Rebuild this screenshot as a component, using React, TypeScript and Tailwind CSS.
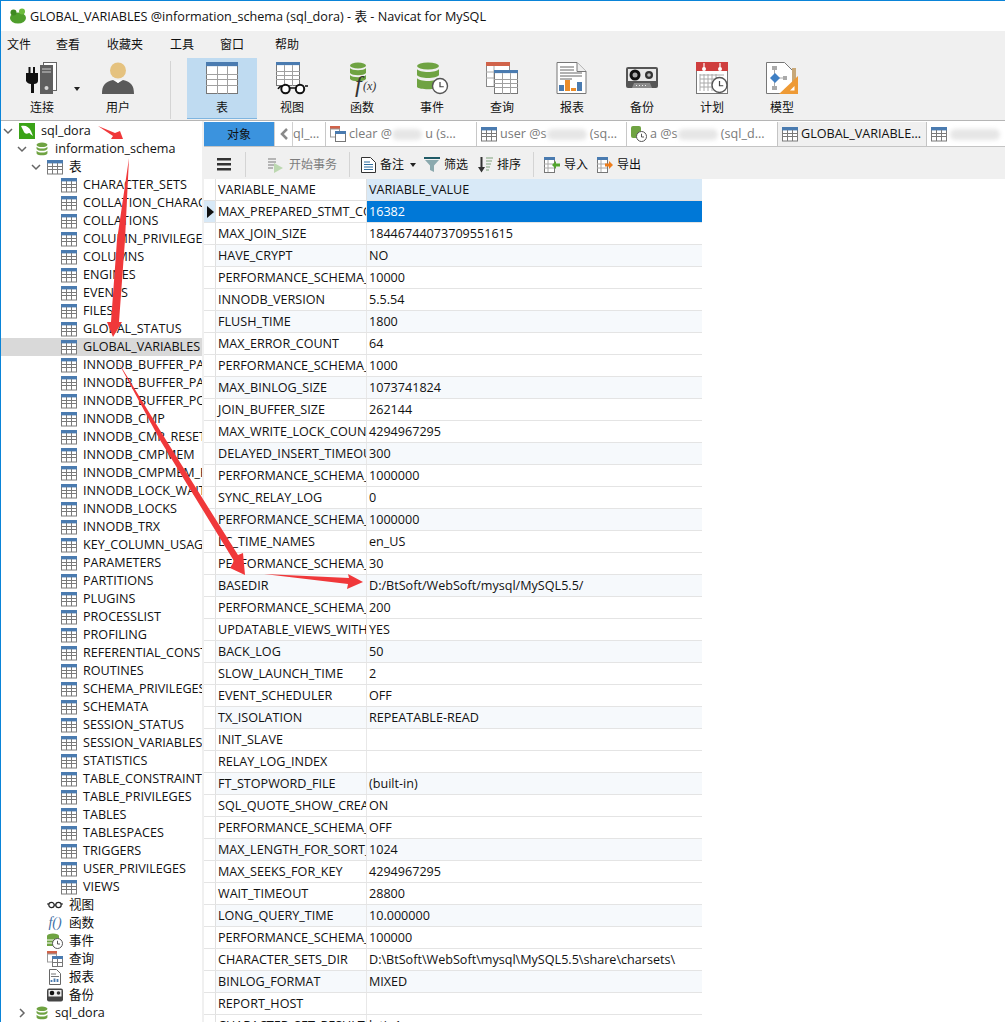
import React from "react";

const FONT = { fontFamily: '"Open Sans","Noto Sans","Noto Sans CJK SC",sans-serif' };

function TableIcon({ size = 16, head = "#4a7bb0", line = "#7a7a7a" }: { size?: number; head?: string; line?: string }) {
  return (
    <svg width={size} height={size} viewBox="0 0 16 16" className="shrink-0">
      <rect x="0.5" y="1.5" width="15" height="13.5" fill="#fff" stroke={line} />
      <rect x="0" y="1" width="16" height="3.4" fill={head} />
      <path d="M0.5 7.5H15.5M0.5 10.5H15.5M5.5 4V15M10.5 4V15" stroke={line} strokeWidth="1" fill="none" />
    </svg>
  );
}

function BigTable({ x = 0, y = 0, w = 32, h = 32, head = "#4a7bb0" }: { x?: number; y?: number; w?: number; h?: number; head?: string }) {
  const c = [1, 2].map((i) => Math.round(x + (w * i) / 3) + 0.5);
  const r = [0.36, 0.54, 0.72].map((f) => Math.round(y + h * f) + 0.5);
  return (
    <g>
      <rect x={x + 0.5} y={y + 0.5} width={w - 1} height={h - 1} fill="#fff" stroke="#777" />
      <rect x={x} y={y} width={w} height={h * 0.13} fill={head} />
      {r.map((f) => (
        <path key={f} d={`M${x} ${f}H${x + w}`} stroke="#a0a0a0" />
      ))}
      {c.map((v) => (
        <path key={v} d={`M${v} ${y + h * 0.13}V${y + h}`} stroke="#a0a0a0" />
      ))}
    </g>
  );
}

function DbStack({ size = 16, color = "#6fa342" }: { size?: number; color?: string }) {
  return (
    <svg width={size} height={size} viewBox="0 0 16 16" className="shrink-0">
      <ellipse cx="8" cy="3.2" rx="6.2" ry="2.6" fill={color} />
      <path d="M1.8 5.4c1 1.6 3.6 2 6.2 2s5.2-.4 6.2-2v2.7c-1 1.6-3.6 2-6.2 2s-5.2-.4-6.2-2z" fill={color} />
      <path d="M1.8 10c1 1.6 3.6 2 6.2 2s5.2-.4 6.2-2v3c-1 1.6-3.6 2.2-6.2 2.2S2.8 14.6 1.8 13z" fill={color} />
    </svg>
  );
}

function Clock({ cx, cy, r }: { cx: number; cy: number; r: number }) {
  return (
    <g>
      <circle cx={cx} cy={cy} r={r} fill="#fff" stroke="#555" strokeWidth={r > 6 ? 1.4 : 1} />
      <path d={`M${cx} ${cy - r * 0.55}V${cy + r * 0.1}H${cx + r * 0.5}`} fill="none" stroke="#444" strokeWidth={r > 6 ? 1.2 : 0.9} />
    </g>
  );
}

const S32 = ({ children }: { children: React.ReactNode }) => (
  <svg width="32" height="32" viewBox="0 0 32 32" className="overflow-visible">
    {children}
  </svg>
);

const BigIcons: Record<string, React.ReactNode> = {
  conn: (
    <svg width="34" height="32" viewBox="0 0 34 32">
      <rect x="18.5" y="0.5" width="13" height="28" fill="#fff" stroke="#666" />
      <rect x="15" y="3" width="13" height="29" fill="#5f5f5f" />
      <path d="M17 7h9M17 10h9" stroke="#cfcfcf" />
      <circle cx="21.5" cy="26" r="2" fill="#d8d8d8" />
      <path d="M1 11h2.5V5h2v6h2.5V5h2v6H13v8c0 2-2 3-4 3v9H6v-9c-2 0-4-1-5-3z" fill="#111" />
    </svg>
  ),
  user: (
    <S32>
      <circle cx="16" cy="8.5" r="8" fill="#e5c27f" />
      <path d="M0 32c0-9 3-12 11-14l5 3 5-3c8 2 11 5 11 14z" fill="#5a5a5a" />
      <path d="M12.5 18l3.5 3 3.5-3" fill="#fff" />
    </S32>
  ),
  table: (
    <S32>
      <BigTable />
    </S32>
  ),
  view: (
    <S32>
      <BigTable x={0} y={0} w={24} h={24} />
      <path d="M2 27c1-2 3-3 5-3M32 24c-1 0-2 0-3 0" stroke="#111" strokeWidth="1.5" fill="none" />
      <circle cx="9.5" cy="27" r="4.2" fill="#fff" stroke="#111" strokeWidth="2" />
      <circle cx="24" cy="27" r="4.2" fill="#fff" stroke="#111" strokeWidth="2" />
      <path d="M13.5 26h6.5" stroke="#111" strokeWidth="1.5" />
    </S32>
  ),
  func: (
    <S32>
      <ellipse cx="12" cy="3.5" rx="8" ry="3" fill="#6fa342" />
      <path d="M4 6c2 3 14 3 16 0v5c-2 3-14 3-16 0z" fill="#6fa342" />
      <path d="M4 13c2 3 14 3 16 0v4c-2 3-14 3-16 0z" fill="#6fa342" />
      <text x="9" y="30" fontFamily="Liberation Serif" fontStyle="italic" fontSize="24" fill="#333">f</text>
      <text x="17" y="28" fontFamily="Liberation Serif" fontStyle="italic" fontSize="12" fill="#333">(x)</text>
    </S32>
  ),
  event: (
    <S32>
      <ellipse cx="12" cy="4" rx="11" ry="3.5" fill="#6fa342" />
      <path d="M1 7c2 4 20 4 22 0v6c-2 4-20 4-22 0z" fill="#6fa342" />
      <path d="M1 16c2 4 20 4 22 0v9c-2 3-20 3-22 0z" fill="#6fa342" />
      <Clock cx={24} cy={24} r={7.5} />
    </S32>
  ),
  query: (
    <S32>
      <rect x="0.5" y="0.5" width="23" height="24" fill="#fff" stroke="#888" />
      <rect x="0" y="0" width="24" height="4" fill="#d0634a" />
      <path d="M0 10h8M0 16h8M8 4v20" stroke="#aaa" />
      <BigTable x={8} y={8} w={24} h={24} />
    </S32>
  ),
  report: (
    <S32>
      <path d="M1 .5h20l9 9v22H1z" fill="#fff" stroke="#777" />
      <path d="M21 .5v9h9" fill="#eee" stroke="#777" />
      <path d="M4 5h14M4 8h14M4 11h22M4 14h22M4 17h12" stroke="#666" />
      <rect x="3" y="23" width="5" height="6" fill="#4a7bb0" />
      <rect x="9" y="18" width="5" height="11" fill="#ea8c2a" />
      <rect x="15" y="26" width="5" height="3" fill="#ea8c2a" />
      <rect x="21" y="20" width="5" height="9" fill="#4a7bb0" />
    </S32>
  ),
  backup: (
    <S32>
      <rect x="0" y="5" width="32" height="21" rx="2" fill="#555" />
      <rect x="2" y="7" width="28" height="12" fill="#e8e8e8" />
      <circle cx="9" cy="13" r="5.5" fill="#111" />
      <circle cx="9" cy="13" r="2.5" fill="#aaa" />
      <circle cx="23" cy="13" r="4" fill="#333" />
      <circle cx="23" cy="13" r="1.8" fill="#bbb" />
      <path d="M6 26l2-5h16l2 5z" fill="#8a8a8a" />
      <path d="M10 23.5h12" stroke="#eee" strokeDasharray="1 2" />
    </S32>
  ),
  plan: (
    <S32>
      <rect x="0.5" y="0.5" width="31" height="31" fill="#fff" stroke="#777" />
      <rect x="0" y="0" width="32" height="9" fill="#cf3e3e" />
      <circle cx="8" cy="7" r="2" fill="#fff" />
      <circle cx="24" cy="7" r="2" fill="#fff" />
      <path d="M8 1v5M24 1v5" stroke="#fff" strokeWidth="1.2" />
      <path d="M4 13h24M4 17h24M4 21h24M4 25h24M8 12v17M12 12v17M16 12v17M20 12v17M4 12v17" stroke="#aaa" />
      <Clock cx={23.5} cy={23} r={7.5} />
    </S32>
  ),
  model: (
    <S32>
      <path d="M.5.5h18l8 8v23H.5z" fill="#fff" stroke="#777" />
      <path d="M6 4h5v4H6zM17 14h4v4h-4zM6 24h5v4H6z" fill="#aaa" />
      <path d="M8.5 8v16M12 16h5" stroke="#aaa" />
      <path d="M9 11l5 5-5 5-5-5z" fill="#3f7fc4" />
      <rect x="26" y="6" width="4" height="16" fill="#c8a878" />
      <path d="M32 14v18H13z" fill="#ee9a35" />
      <path d="M28.5 24v4.5H24z" fill="#fff" />
    </S32>
  ),
};

const tools: [string, string][] = [
  ["conn", "连接"],
  ["user", "用户"],
  ["table", "表"],
  ["view", "视图"],
  ["func", "函数"],
  ["event", "事件"],
  ["query", "查询"],
  ["report", "报表"],
  ["backup", "备份"],
  ["plan", "计划"],
  ["model", "模型"],
];

const tables = [
  "CHARACTER_SETS","COLLATION_CHARACTER_SET_APPLICABILITY","COLLATIONS","COLUMN_PRIVILEGES","COLUMNS","ENGINES","EVENTS","FILES","GLOBAL_STATUS","GLOBAL_VARIABLES","INNODB_BUFFER_PAGE","INNODB_BUFFER_PAGE_LRU","INNODB_BUFFER_POOL_STATS","INNODB_CMP","INNODB_CMP_RESET","INNODB_CMPMEM","INNODB_CMPMEM_RESET","INNODB_LOCK_WAITS","INNODB_LOCKS","INNODB_TRX","KEY_COLUMN_USAGE","PARAMETERS","PARTITIONS","PLUGINS","PROCESSLIST","PROFILING","REFERENTIAL_CONSTRAINTS","ROUTINES","SCHEMA_PRIVILEGES","SCHEMATA","SESSION_STATUS","SESSION_VARIABLES","STATISTICS","TABLE_CONSTRAINTS","TABLE_PRIVILEGES","TABLES","TABLESPACES","TRIGGERS","USER_PRIVILEGES","VIEWS",
];

const P = "PERFORMANCE_SCHEMA_MAX_INSTANCES";
const rows: [string, string][] = [
  ["MAX_PREPARED_STMT_COUNT","16382"],["MAX_JOIN_SIZE","18446744073709551615"],["HAVE_CRYPT","NO"],[P,"10000"],["INNODB_VERSION","5.5.54"],["FLUSH_TIME","1800"],["MAX_ERROR_COUNT","64"],[P,"1000"],["MAX_BINLOG_SIZE","1073741824"],["JOIN_BUFFER_SIZE","262144"],["MAX_WRITE_LOCK_COUNT","4294967295"],["DELAYED_INSERT_TIMEOUT","300"],[P,"1000000"],["SYNC_RELAY_LOG","0"],[P,"1000000"],["LC_TIME_NAMES","en_US"],[P,"30"],["BASEDIR","D:/BtSoft/WebSoft/mysql/MySQL5.5/"],[P,"200"],["UPDATABLE_VIEWS_WITH_LIMIT","YES"],["BACK_LOG","50"],["SLOW_LAUNCH_TIME","2"],["EVENT_SCHEDULER","OFF"],["TX_ISOLATION","REPEATABLE-READ"],["INIT_SLAVE",""],["RELAY_LOG_INDEX",""],["FT_STOPWORD_FILE","(built-in)"],["SQL_QUOTE_SHOW_CREATE","ON"],[P,"OFF"],["MAX_LENGTH_FOR_SORT_DATA","1024"],["MAX_SEEKS_FOR_KEY","4294967295"],["WAIT_TIMEOUT","28800"],["LONG_QUERY_TIME","10.000000"],[P,"100000"],["CHARACTER_SETS_DIR","D:\\BtSoft\\WebSoft\\mysql\\MySQL5.5\\share\\charsets\\"],["BINLOG_FORMAT","MIXED"],["REPORT_HOST",""],["CHARACTER_SET_RESULTS","latin1"],
];

const Chevron = ({ open = true }: { open?: boolean }) => (
  <svg width="10" height="10" viewBox="0 0 10 10" className="shrink-0">
    <path d={open ? "M1 3l4 4 4-4" : "M3 1l4 4-4 4"} fill="none" stroke="#666" strokeWidth="1.5" />
  </svg>
);

function TreeRow({ pad, chev, icon, label, active }: { pad: string; chev?: boolean | "closed"; icon: React.ReactNode; label: string; active?: boolean }) {
  return (
    <div className={`flex h-[18px] items-center whitespace-nowrap overflow-hidden text-[12.6px] leading-[18px] text-[#111] ${pad} ${active ? "bg-[#d9d9d9]" : ""}`}>
      {chev ? <Chevron open={chev !== "closed"} /> : null}
      {icon}
      <span className="ml-[6px]">{label}</span>
    </div>
  );
}

const Blob = ({ w }: { w: string }) => <span className={`inline-block h-[11px] rounded-full bg-[#e6e6e6] blur-[2px] align-middle ${w}`} />;

function Tab({ w, icon, children, active }: { w: string; icon: React.ReactNode; children: React.ReactNode; active?: boolean }) {
  return (
    <div className={`flex h-full shrink-0 items-center gap-[3px] whitespace-nowrap overflow-hidden pl-[4px] text-[12.6px] ${w} ${active ? "bg-[#f0f0f0] text-[#111]" : "bg-white text-[#7a7a7a]"}`}>
      {icon}
      {children}
    </div>
  );
}

const Sep = () => <div className="h-[25px] w-px shrink-0 bg-[#d4d4d4]" />;

export default function App() {
  return (
    <div style={FONT} className="relative h-[1022px] w-[1005px] overflow-hidden border-l border-t border-[#0a84d8] bg-white">
      {/* title */}
      <div className="flex h-[30px] items-center bg-white pl-[8px] text-[12.65px] text-[#111]">
        <svg width="18" height="16" viewBox="0 0 18 16" className="shrink-0">
          <ellipse cx="9" cy="10" rx="8" ry="5.5" fill="#4f9e2c" />
          <circle cx="4.5" cy="4.5" r="3" fill="#3f8a22" />
          <circle cx="13" cy="3.5" r="3" fill="#6bbb3c" />
        </svg>
        <span className="ml-[3px]">GLOBAL_VARIABLES @information_schema (sql_dora) - 表 - Navicat for MySQL</span>
      </div>
      {/* menu */}
      <div className="flex h-[25px] items-center bg-[#f0f0f0] pl-[6px] pt-[3px] text-[12px] text-[#111]">
        <span>文件</span>
        <span className="ml-[25px]">查看</span>
        <span className="ml-[27px]">收藏夹</span>
        <span className="ml-[27px]">工具</span>
        <span className="ml-[26px]">窗口</span>
        <span className="ml-[31px]">帮助</span>
      </div>
      {/* toolbar */}
      <div className="flex h-[65px] bg-[#f0f0f0] pl-[6px] border-b border-[#b5b5b5]">
        {tools.map(([k, l]) => (
          <React.Fragment key={k}>
            <div className={`relative flex h-[61px] w-[70px] shrink-0 flex-col items-center pt-[4px] text-[12px] text-[#111] mt-[2px] ${k === "table" ? "bg-[#bfdbf1] border-b border-[#7fb5e0]" : ""} ${k === "user" ? "ml-[6px]" : ""}`}>
              <div className="flex h-[32px] items-center">{BigIcons[k]}</div>
              <span className="mt-[5px] leading-[18px]">{l}</span>
              {k === "conn" ? (
                <svg width="6" height="4" viewBox="0 0 6 4" className="absolute left-[67px] top-[29px]">
                  <path d="M0 0h6L3 4z" fill="#222" />
                </svg>
              ) : null}
            </div>
            {k === "user" ? <div className="ml-[17px] mr-[16px] mt-[5px] h-[58px] w-px shrink-0 bg-[#d4d4d4]" /> : null}
          </React.Fragment>
        ))}
      </div>
      <div className="flex h-[901px]">
        {/* tree */}
        <div className="h-full w-[201px] shrink-0 overflow-hidden bg-white pt-[1px]">
          <TreeRow
            pad="pl-[2px]"
            chev
            label="sql_dora"
            icon={
              <svg width="16" height="16" viewBox="0 0 16 16" className="ml-[6px] shrink-0">
                <rect width="16" height="16" fill="#3aa317" />
                <path d="M2 3c5-1 8 1 10 5l2 5c-2-1-3-3-4-3-2 1-4 1-5-1C4 7 3 5 2 3z" fill="#fff" />
              </svg>
            }
          />
          <TreeRow pad="pl-[16px]" chev label="information_schema" icon={<span className="ml-[8px] flex"><DbStack size={14} /></span>} />
          <TreeRow pad="pl-[30px]" chev label="表" icon={<span className="ml-[6px] flex"><TableIcon /></span>} />
          {tables.map((t) => (
            <TreeRow key={t} pad="pl-[60px]" label={t} active={t === "GLOBAL_VARIABLES"} icon={<TableIcon />} />
          ))}
          <TreeRow
            pad="pl-[46px]"
            label="视图"
            icon={
              <svg width="16" height="16" viewBox="0 0 16 16" className="shrink-0">
                <circle cx="4.5" cy="8" r="2.7" fill="none" stroke="#222" strokeWidth="1.2" />
                <circle cx="11.5" cy="8" r="2.7" fill="none" stroke="#222" strokeWidth="1.2" />
                <path d="M7 8h2M0 7l2 0M14 7l2 0" stroke="#222" />
              </svg>
            }
          />
          <TreeRow
            pad="pl-[46px]"
            label="函数"
            icon={
              <span className="inline-block w-[16px] text-center font-['Liberation_Serif'] text-[14px] italic leading-[16px] text-[#3b6ea5]">f()</span>
            }
          />
          <TreeRow
            pad="pl-[46px]"
            label="事件"
            icon={
              <svg width="16" height="16" viewBox="0 0 16 16" className="shrink-0">
                <ellipse cx="6" cy="3" rx="6" ry="2.5" fill="#6fa342" />
                <rect x="0" y="3" width="12" height="10" fill="#6fa342" />
                <path d="M0 7h8M0 10h6" stroke="#fff" />
                <Clock cx={10.5} cy={10.5} r={5} />
              </svg>
            }
          />
          <TreeRow
            pad="pl-[46px]"
            label="查询"
            icon={
              <svg width="16" height="16" viewBox="0 0 16 16" className="shrink-0">
                <rect x="0" y="0" width="10" height="3" fill="#d0634a" />
                <rect x="0.5" y="3" width="9" height="8" fill="#fff" stroke="#999" />
                <rect x="5.5" y="5.5" width="10" height="10" fill="#fff" stroke="#777" />
                <rect x="5" y="5" width="11" height="3" fill="#4a7bb0" />
                <path d="M10.5 8v7M5.5 11.5h10" stroke="#777" />
              </svg>
            }
          />
          <TreeRow
            pad="pl-[46px]"
            label="报表"
            icon={
              <svg width="16" height="16" viewBox="0 0 16 16" className="shrink-0">
                <path d="M2.5.5h7l4 4v11h-11z" fill="#fff" stroke="#666" />
                <path d="M4 5h5M4 7.5h8" stroke="#777" />
                <path d="M4.5 13v-2M7.5 13V9.5M10.5 13v-3" stroke="#4a7bb0" strokeWidth="1.8" />
              </svg>
            }
          />
          <TreeRow
            pad="pl-[46px]"
            label="备份"
            icon={
              <svg width="16" height="16" viewBox="0 0 16 16" className="shrink-0">
                <rect x="0" y="1.5" width="16" height="13" rx="2" fill="#444" />
                <rect x="1.5" y="3" width="13" height="6.5" fill="#eee" />
                <circle cx="5" cy="6" r="2.3" fill="#111" />
                <circle cx="11.5" cy="6" r="1.8" fill="#333" />
              </svg>
            }
          />
          <TreeRow pad="pl-[16px]" chev="closed" label="sql_dora" icon={<span className="ml-[8px] flex"><DbStack size={14} /></span>} />
        </div>
        {/* splitter */}
        <div className="h-full w-[2px] shrink-0 bg-[#f0f0f0]" />
        <div className="min-w-0 flex-1">
          {/* tabs */}
          <div className="flex h-[26px] items-stretch border-b border-[#c4c4c4] bg-white pt-px">
            <div className="flex w-[70px] shrink-0 items-center justify-center bg-[#3b93de] pt-[2px] text-[12px] text-[#111]">对象</div>
            <div className="flex w-[18px] shrink-0 items-center justify-center bg-white border-l border-[#d0d0d0]">
              <svg width="10" height="12" viewBox="0 0 10 12">
                <path d="M8 1L3 6l5 5" fill="none" stroke="#8a8a8a" strokeWidth="2.5" />
              </svg>
            </div>
            <div className="flex w-[33px] shrink-0 items-center overflow-hidden whitespace-nowrap border-l border-[#d0d0d0] text-[12.6px] text-[#7a7a7a]">ql_...</div>
            <Tab w="w-[151px] border-l border-[#c8c8c8]" icon={<svg width="16" height="16" viewBox="0 0 16 16" className="shrink-0"><rect width="10" height="3" fill="#d0634a" /><rect x="0.5" y="3" width="9" height="8" fill="#fff" stroke="#999" /><rect x="5.5" y="5.5" width="10" height="10" fill="#fff" stroke="#777" /><rect x="5" y="5" width="11" height="3" fill="#4a7bb0" /></svg>}>
              <span>clear @<Blob w="w-[30px]" /> u (s...</span>
            </Tab>
            <Tab w="w-[150px] border-l border-[#c8c8c8]" icon={<TableIcon />}>
              <span>user @s<Blob w="w-[40px]" /> (sq...</span>
            </Tab>
            <Tab w="w-[151px] border-l border-[#c8c8c8]" icon={<svg width="16" height="16" viewBox="0 0 16 16" className="shrink-0"><rect width="10" height="12" rx="2" fill="#6fa342" /><Clock cx={10.5} cy={10.5} r={5} /></svg>}>
              <span>a @s<Blob w="w-[40px]" /> (sql_d...</span>
            </Tab>
            <Tab active w="w-[149px] border-l border-[#c4c4c4] h-[25px]" icon={<TableIcon />}>
              <span>GLOBAL_VARIABLE...</span>
            </Tab>
            <Tab w="flex-1 border-l border-[#c4c4c4]" icon={<TableIcon />}>
              <Blob w="w-[50px]" />
            </Tab>
          </div>
          {/* sub toolbar */}
          <div className="flex h-[32px] items-center bg-[#f0f0f0] pt-[3px] text-[12px] text-[#111]">
            <svg width="14" height="13" viewBox="0 0 14 13" className="ml-[13px] shrink-0">
              <path d="M0 0h14v2.5H0zM0 5h14v2.5H0zM0 10h14v2.5H0z" fill="#333" />
            </svg>
            <div className="ml-[14px]"><Sep /></div>
            <svg width="16" height="16" viewBox="0 0 16 16" className="ml-[22px] shrink-0">
              <path d="M0 1h8v2H0zM0 4h8v2H0zM0 7h6v2H0zM0 10h5v2H0z" fill="#b5b5b5" />
              <path d="M6 6l9 5-9 5z" fill="#bcd8b0" />
            </svg>
            <span className="ml-[5px] pt-[1px] text-[#7d7d7d]">开始事务</span>
            <div className="ml-[12px]"><Sep /></div>
            <svg width="15" height="16" viewBox="0 0 15 16" className="ml-[11px] shrink-0">
              <path d="M.5.5h9l5 5v10H.5z" fill="#fff" stroke="#333" />
              <path d="M3 5h6M3 7.5h9M3 10h9M3 12.5h9" stroke="#2f6d9e" />
            </svg>
            <span className="ml-[4px] pt-[1px]">备注</span>
            <svg width="6" height="4" viewBox="0 0 6 4" className="ml-[6px] shrink-0"><path d="M0 0h6L3 4z" fill="#222" /></svg>
            <svg width="16" height="15" viewBox="0 0 16 15" className="ml-[8px] shrink-0">
              <path d="M0 0h16v2H0z" fill="#1f5a66" />
              <path d="M1 3h14L10 8.5V15l-4-2V8.5z" fill="#8ba9ae" />
            </svg>
            <span className="ml-[4px] pt-[1px]">筛选</span>
            <svg width="16" height="16" viewBox="0 0 16 16" className="ml-[9px] shrink-0">
              <path d="M3.5 0h2v10H8l-3.5 5.5L1 10h2.5z" fill="#333" />
              <path d="M9 1h7M9 4h6M9 7h5M9 10h4M9 13h3" stroke="#7fa37c" />
            </svg>
            <span className="ml-[4px] pt-[1px]">排序</span>
            <div className="ml-[12px]"><Sep /></div>
            <svg width="16" height="16" viewBox="0 0 16 16" className="ml-[10px] shrink-0">
              <rect x="0.5" y="0.5" width="10" height="15" fill="#fff" stroke="#777" />
              <rect width="11" height="3" fill="#4a7bb0" />
              <path d="M0 7h10M0 11h10M4 3v12" stroke="#aaa" />
              <path d="M8 8l4-4v2.5h4v3h-4V12z" fill="#53a52e" />
            </svg>
            <span className="ml-[4px] pt-[1px]">导入</span>
            <svg width="16" height="16" viewBox="0 0 16 16" className="ml-[9px] shrink-0">
              <rect x="0.5" y="0.5" width="10" height="15" fill="#fff" stroke="#777" />
              <rect width="11" height="3" fill="#4a7bb0" />
              <path d="M0 7h10M0 11h10M4 3v12" stroke="#aaa" />
              <path d="M16 8l-4-4v2.5H8v3h4V12z" fill="#ee7d1a" />
            </svg>
            <span className="ml-[4px] pt-[1px]">导出</span>
          </div>
          {/* grid */}
          <div className="w-[498px] text-[12.6px] text-[#111]">
            <div className="flex h-[22px] border-b border-[#e0e0e0]">
              <div className="w-[12px] shrink-0 border-r border-[#e0e0e0] bg-white" />
              <div className="flex w-[151px] shrink-0 items-center overflow-hidden whitespace-nowrap border-r border-[#e0e0e0] pl-[2px] pt-[2px]">VARIABLE_NAME</div>
              <div className="flex flex-1 items-center bg-[#d8e9f7] pl-[2px] pt-[2px]">VARIABLE_VALUE</div>
            </div>
            {rows.map(([n, v], i) => (
              <div key={i} className={`flex h-[22px] border-b border-[#e4e4e4] ${i % 3 === 2 ? "bg-[#f6f9fc]" : "bg-white"}`}>
                <div className={`flex w-[12px] shrink-0 items-center border-r border-[#e0e0e0] ${i === 0 ? "bg-[#d8e9f7]" : "bg-white"}`}>
                  {i === 0 ? (
                    <svg width="7" height="12" viewBox="0 0 7 12" className="ml-[3px]"><path d="M0 0l7 6-7 6z" fill="#111" /></svg>
                  ) : null}
                </div>
                <div className="flex w-[151px] shrink-0 items-center overflow-hidden whitespace-nowrap border-r border-[#e8e8e8] pl-[2px] pt-[2px]">{n}</div>
                <div className={`flex flex-1 items-center whitespace-nowrap pl-[2px] pt-[2px] ${i === 0 ? "bg-[#0078d7] text-white" : ""}`}>{v}</div>
              </div>
            ))}
          </div>
        </div>
      </div>
      {/* annotation arrows lying over the window */}
      <svg width="1005" height="1022" viewBox="0 0 1005 1022" className="pointer-events-none absolute left-[-1px] top-[-1px]">
        <g fill="#f0383a">
          <path d="M98 126L115 133L120 131L123 139L111 139L113 136Z" />
          <path d="M129 158L125 240L119 322L122 322L113 337L107 322L111 322L117 240Z" />
          <path d="M117 360L166 440L238 555L243 553L245 575L230 568L234 561L160 440Z" />
          <path d="M264 574L349 578L348 574L363 582L347 589L348 584Z" />
        </g>
      </svg>
    </div>
  );
}
